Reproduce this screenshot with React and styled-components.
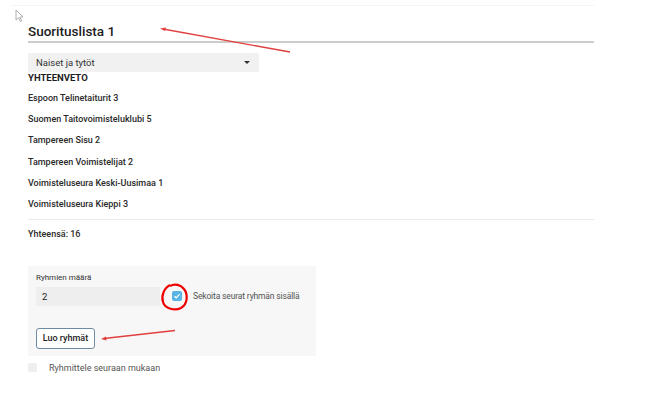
import React from 'react';
import styled, { createGlobalStyle } from 'styled-components';

const GlobalStyle = createGlobalStyle`
  body {
    margin: 0;
    background: #ffffff;
    font-family: Roboto, "Noto Sans", Arial, sans-serif;
    color: #222;
  }
`;

const Page = styled.div`
  position: relative;
  width: 667px;
  height: 396px;
  overflow: hidden;
  padding: 5px 0 0 28px;
  box-sizing: border-box;
`;

const TopRule = styled.div`
  position: absolute;
  top: 5px;
  left: 10px;
  width: 584px;
  height: 1px;
  background: #f5f5f5;
`;

const Content = styled.div`
  width: 566px;
`;

const Title = styled.h2`
  margin: 0;
  padding-top: 18px;
  height: 18px;
  font-size: 13.5px;
  line-height: 16px;
  font-weight: 500;
  color: #1d1d1d;
  border-bottom: 2px solid #cccccc;
`;

const Select = styled.div`
  margin-top: 10px;
  width: 231px;
  height: 19px;
  background: #f1f1f1;
  border-radius: 2px;
  display: flex;
  align-items: center;
  justify-content: space-between;
  padding: 0 9px 0 8px;
  box-sizing: border-box;
  font-size: 9.5px;
  color: #333;
`;

const Caret = styled.span`
  width: 0;
  height: 0;
  border-left: 3px solid transparent;
  border-right: 3px solid transparent;
  border-top: 3px solid #333;
`;

const SectionHead = styled.div`
  font-size: 9.5px;
  font-weight: 700;
  line-height: 12px;
  color: #1d1d1d;
`;

const ClubList = styled.div`
  display: flex;
  flex-direction: column;
  padding-top: 3px;
`;

const Club = styled.div`
  height: 21.3px;
  display: flex;
  align-items: center;
  font-size: 9px;
  font-weight: 500;
  color: #2a2a2a;
`;

const Divider = styled.div`
  margin-top: 4px;
  height: 1px;
  background: #eaeaea;
`;

const Total = styled.div`
  margin-top: 8px;
  font-size: 9px;
  font-weight: 500;
  line-height: 12px;
  color: #2a2a2a;
`;

const Panel = styled.div`
  margin-top: 26px;
  width: 288px;
  height: 90px;
  background: #f7f7f7;
  padding: 7px 0 0 8px;
  box-sizing: border-box;
`;

const FieldLabel = styled.div`
  font-size: 8px;
  color: #333;
  line-height: 10px;
`;

const FieldRow = styled.div`
  margin-top: 4px;
  display: flex;
  align-items: center;
  white-space: nowrap;
`;

const NumInput = styled.div`
  flex-shrink: 0;
  width: 124px;
  height: 19px;
  background: #eeeeee;
  display: flex;
  align-items: center;
  padding-left: 6px;
  box-sizing: border-box;
  font-size: 9.5px;
  color: #222;
`;

const Box = styled.span`
  width: ${p => p.size}px;
  height: ${p => p.size}px;
  border-radius: 2px;
  background: ${p => (p.checked ? '#58b4e3' : '#eeeeee')};
  display: inline-flex;
  align-items: center;
  justify-content: center;
  flex-shrink: 0;
  margin: ${p => p.margin};
`;

const CheckLabel = styled.span`
  font-size: ${p => p.size || 9}px;
  letter-spacing: ${p => p.tight ? '-0.15px' : '0'};
  color: #555;
  white-space: nowrap;
`;

const Button = styled.button`
  display: block;
  margin-top: 22px;
  height: 21px;
  width: 59px;
  border: 1px solid #6f8aa3;
  border-radius: 3px;
  background: #ffffff;
  font-family: inherit;
  font-size: 9px;
  font-weight: 500;
  color: #1d1d1d;
  padding: 0;
`;

const BottomRow = styled.div`
  margin-top: 8px;
  display: flex;
  align-items: center;
  height: 8px;
`;

const Overlay = styled.svg`
  position: absolute;
  left: 0;
  top: 0;
  pointer-events: none;
`;

const clubs = [
  'Espoon Telinetaiturit 3',
  'Suomen Taitovoimisteluklubi 5',
  'Tampereen Sisu 2',
  'Tampereen Voimistelijat 2',
  'Voimisteluseura Keski-Uusimaa 1',
  'Voimisteluseura Kieppi 3',
];

export default function App() {
  return (
    <Page>
      <GlobalStyle />
      <TopRule />
      <Content>
        <Title>Suorituslista 1</Title>
        <Select>
          <span>Naiset ja tytöt</span>
          <Caret />
        </Select>
        <SectionHead>YHTEENVETO</SectionHead>
        <ClubList>
          {clubs.map(c => (
            <Club key={c}>{c}</Club>
          ))}
        </ClubList>
        <Divider />
        <Total>Yhteensä: 16</Total>
        <Panel>
          <FieldLabel>Ryhmien määrä</FieldLabel>
          <FieldRow>
            <NumInput>2</NumInput>
            <Box checked size={10} margin="0 11px 0 12px">
              <svg width="8" height="8" viewBox="0 0 8 8">
                <path d="M1.5 4.2 L3.2 5.8 L6.6 2.2" fill="none" stroke="#fff" strokeWidth="1.2" />
              </svg>
            </Box>
            <CheckLabel size={8.5} tight>Sekoita seurat ryhmän sisällä</CheckLabel>
          </FieldRow>
          <Button>Luo ryhmät</Button>
        </Panel>
        <BottomRow>
          <Box size={9} margin="0 12px 0 0" />
          <CheckLabel>Ryhmittele seuraan mukaan</CheckLabel>
        </BottomRow>
      </Content>
      <Overlay width="667" height="396">
        <path d="M16 10 L16 20 L18.5 17.8 L20.5 21.5 L21.8 20.8 L19.8 17.2 L23 17 Z" fill="#fff" stroke="#9a9a9a" strokeWidth="0.8" />
        <line x1="290" y1="52" x2="163" y2="29" stroke="#e0403f" strokeWidth="1.3" />
        <path d="M160 28.5 L166 27.5 L165 31 Z" fill="#e0403f" />
        <line x1="175" y1="330.5" x2="104" y2="338.5" stroke="#e0403f" strokeWidth="1.3" />
        <path d="M101 339 L106 336.5 L106.5 340.5 Z" fill="#e0403f" />
        <path d="M170 285 C164 288 161 296 163 302 C165 309 175 311 181 308 C188 304 188 294 184 289 C181 285 175 283 170 286" fill="none" stroke="#ee0000" strokeWidth="2.2" />
      </Overlay>
    </Page>
  );
}
